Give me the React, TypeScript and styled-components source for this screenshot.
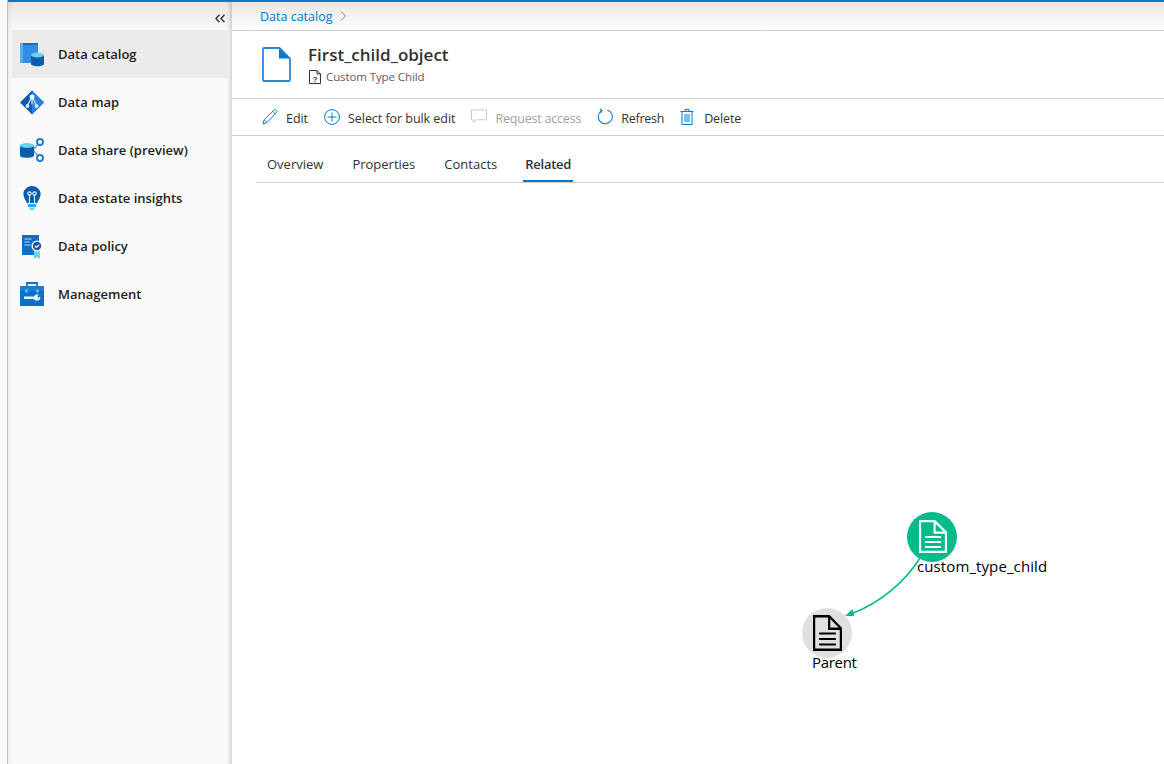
import { createGlobalStyle, styled } from "styled-components";
import type { ReactNode } from "react";

const FONT = `"Open Sans", "Noto Sans", "Liberation Sans", sans-serif`;

const GlobalStyle = createGlobalStyle`
  html, body { margin: 0; padding: 0; height: 100%; background: #fff; overflow: hidden; }
  * { box-sizing: border-box; }
  #root { height: 100%; }
`;

const Shell = styled.div`
  display: flex;
  width: 1164px;
  height: 764px;
  font-family: ${FONT};
  color: #323130;
  background: #fff;
`;

const Gutter = styled.div`
  width: 8px;
  flex: none;
  background: #f9f9f9;
  border-right: 1px solid #bdbdbd;
`;

const Frame = styled.div`
  flex: 1;
  display: flex;
  flex-direction: column;
  min-width: 0;
`;

const TopBar = styled.div`
  height: 2px;
  flex: none;
  background: #0078d4;
`;

const Body = styled.div`
  flex: 1;
  display: flex;
  min-height: 0;
`;

const Sidebar = styled.nav`
  width: 224px;
  flex: none;
  background: linear-gradient(#e6e6e6 0, #f6f6f6 22px, #fafafa 30px);
  box-shadow: inset -5px 0 4px -3px rgba(0, 0, 0, 0.18), inset 5px 0 4px -3px rgba(0, 0, 0, 0.06);
  padding: 4px 4px 0 4px;
  display: flex;
  flex-direction: column;
`;

const CollapseRow = styled.div`
  height: 24px;
  display: flex;
  align-items: center;
  justify-content: flex-end;
  padding-right: 3px;
`;

const NavItem = styled.div<{ $active?: boolean }>`
  height: 48px;
  display: flex;
  align-items: center;
  gap: 12px;
  padding-left: 8px;
  background: ${({ $active }) => ($active ? "#edebe9" : "transparent")};
  font-size: 13px;
  font-weight: 600;
  color: #201f1e;
`;

const NavIcon = styled.span`
  width: 26px;
  height: 26px;
  flex: none;
  display: flex;
`;

const Main = styled.main`
  flex: 1;
  min-width: 0;
  display: flex;
  flex-direction: column;
`;

const Crumbs = styled.div`
  height: 29px;
  flex: none;
  display: flex;
  align-items: center;
  gap: 8px;
  padding-left: 28px;
  font-size: 12.5px;
  color: #0078d4;
  background: linear-gradient(#e6e6e6, #ffffff);
  border-bottom: 1px solid #cfcfcf;
`;

const TitleBlock = styled.div`
  height: 68px;
  flex: none;
  display: flex;
  align-items: center;
  padding-left: 30px;
  gap: 17px;
  border-bottom: 1px solid #cfcfcf;
`;

const TitleText = styled.div`
  display: flex;
  flex-direction: column;
  gap: 2px;
`;

const Title = styled.h1`
  margin: 0;
  font-size: 17px;
  line-height: 22px;
  font-weight: 600;
  color: #323130;
`;

const Subtitle = styled.div`
  display: flex;
  align-items: center;
  gap: 5px;
  padding-left: 1px;
  font-size: 11.5px;
  line-height: 17px;
  color: #605e5c;
  letter-spacing: -0.1px;
`;

const Toolbar = styled.div`
  height: 37px;
  flex: none;
  display: flex;
  align-items: center;
  padding: 3px 0 0 30px;
  gap: 16px;
  border-bottom: 1px solid #cfcfcf;
`;

const Action = styled.div<{ $disabled?: boolean; $spacing: number }>`
  display: flex;
  align-items: center;
  gap: 8px;
  font-size: 12.5px;
  letter-spacing: ${({ $spacing }) => $spacing}px;
  color: ${({ $disabled }) => ($disabled ? "#a19f9d" : "#323130")};
`;

const ActionIcon = styled.span`
  display: flex;
  width: 16px;
  margin-top: -4px;
`;

const Tabs = styled.div`
  height: 47px;
  flex: none;
  margin-left: 24px;
  padding-left: 9px;
  display: flex;
  align-items: stretch;
  gap: 25px;
  border-bottom: 1px solid #cfcfcf;
`;

const Tab = styled.div<{ $active?: boolean }>`
  display: flex;
  align-items: center;
  padding: 11px 2px 0;
  margin-left: ${({ $active }) => ($active ? "-1px" : "0")};
  font-size: 13px;
  font-weight: ${({ $active }) => ($active ? 600 : 400)};
  letter-spacing: ${({ $active }) => ($active ? "-0.25px" : "0")};
  color: #323130;
  border-bottom: 2px solid ${({ $active }) => ($active ? "#0078d4" : "transparent")};
`;

const Canvas = styled.div`
  flex: 1;
  position: relative;
  min-height: 0;
`;

const Graph = styled.svg`
  position: absolute;
  left: 0;
  top: 0;
`;

const NodeLabel = styled.div<{ $x: number; $y: number; $spacing: number }>`
  position: absolute;
  left: ${({ $x }) => $x}px;
  top: ${({ $y }) => $y}px;
  font-size: 15px;
  line-height: 18px;
  color: #000;
  letter-spacing: ${({ $spacing }) => $spacing}px;
`;

const CatalogIcon = () => (
  <svg width="26" height="26" viewBox="0 0 26 26">
    <rect x="0" y="2" width="18" height="20" rx="1" fill="#2f8fe6" />
    <rect x="0" y="2" width="3" height="20" fill="#5ea9ea" />
    <rect x="3" y="2" width="15" height="2" fill="#0f6fc6" />
    <path d="M11 14v9c0 1.200 2.800 2.200 6.500 2.200S24 24.200 24 23v-9z" fill="#0b5cab" />
    <ellipse cx="17.500" cy="14" rx="6.500" ry="2.400" fill="#6fd0ea" />
  </svg>
);

const MapIcon = () => (
  <svg width="26" height="26" viewBox="0 0 26 26">
    <path d="M12 1.500l12 12-12 12-12-12z" fill="#0b5cab" />
    <path d="M12 1.500l12 12-12 12z" fill="#2a7fd8" />
    <path d="M12 7.500l-4.500 9M12 7.500l4.500 9M12 7.500v8" stroke="#cfe6fa" strokeWidth="1.300" fill="none" />
    <circle cx="12" cy="8" r="2.400" fill="#fff" />
    <circle cx="7.500" cy="17" r="1.900" fill="#dff0fd" />
    <circle cx="16.500" cy="17" r="1.900" fill="#dff0fd" />
  </svg>
);

const ShareIcon = () => (
  <svg width="26" height="26" viewBox="0 0 26 26">
    <path d="M13 13l7-8M13 13l7 8" stroke="#8a9db0" strokeWidth="1.500" fill="none" />
    <circle cx="20" cy="5" r="3" fill="#fff" stroke="#1a7fd4" strokeWidth="2" />
    <circle cx="20" cy="21" r="3" fill="#fff" stroke="#1a7fd4" strokeWidth="2" />
    <path d="M0 8.500v10c0 1.300 3.200 2.300 7 2.300s7-1 7-2.300v-10z" fill="#0b5cab" />
    <ellipse cx="7" cy="8.500" rx="7" ry="2.500" fill="#6fd0ea" />
  </svg>
);

const InsightsIcon = () => (
  <svg width="26" height="26" viewBox="0 0 26 26">
    <path d="M12 1C7 1 3.400 4.700 3.400 9.300c0 3.700 2.600 6 3.400 8.700h10.400c.8-2.700 3.400-5 3.400-8.700C20.600 4.700 17 1 12 1z" fill="#0b5cab" />
    <path d="M7.500 19h9l-.6 3H8.100z" fill="#35a7e8" />
    <path d="M9 22.500h6l-1 2.500h-4z" fill="#6fd8ee" />
    <path d="M9.500 18v-8M14.500 18v-8" stroke="#cfe6fa" strokeWidth="1.200" />
    <circle cx="9.500" cy="8.500" r="1.700" fill="none" stroke="#e6f3fd" strokeWidth="1.200" />
    <circle cx="14.500" cy="8.500" r="1.700" fill="none" stroke="#e6f3fd" strokeWidth="1.200" />
  </svg>
);

const PolicyIcon = () => (
  <svg width="26" height="26" viewBox="0 0 26 26">
    <rect x="2" y="2" width="17" height="20" fill="#0f6fc6" />
    <path d="M4.500 6h7M4.500 9h5M4.500 12h6" stroke="#bcdcf5" strokeWidth="1.200" />
    <path d="M14 16v10l3-2 3 2V16z" fill="#6fd0ea" />
    <circle cx="17" cy="13" r="5.500" fill="#fff" />
    <circle cx="17" cy="13" r="4.200" fill="#0b5cab" />
    <path d="M15 13l1.500 1.500 2.700-2.800" stroke="#fff" strokeWidth="1.100" fill="none" />
  </svg>
);

const ManagementIcon = () => (
  <svg width="26" height="26" viewBox="0 0 26 26">
    <path d="M7 5V2h10v3" fill="none" stroke="#0f6fc6" strokeWidth="1.800" />
    <rect x="0" y="5" width="24" height="20" fill="#0f6fc6" />
    <rect x="0" y="5" width="24" height="5" fill="#1a7fd4" />
    <rect x="5.500" y="8.500" width="2" height="3" fill="#6fd0ea" />
    <rect x="16.500" y="8.500" width="2" height="3" fill="#6fd0ea" />
    <path d="M4 15.500h10l1.500-2h3.500l-1.500 2 1 1.300 1.700-1.200v2.400l-1.500 1.500h-3.700l-1.300-1.500H4z" fill="#e4eef8" />
  </svg>
);

const DocGlyph = ({ color, x, y, width, height }: { color: string; x: number; y: number; width: number; height: number }) => (
  <svg x={x} y={y} width={width} height={height} viewBox="0 0 26 30" preserveAspectRatio="none">
    <path d="M1 1h13.500L25 11v18H1z" fill="none" stroke={color} strokeWidth="2" />
    <path d="M14.500 1v10.500H25" fill="none" stroke={color} strokeWidth="2" />
    <path d="M5.500 15.500h15M5.500 20h15M5.500 24.500h15" stroke={color} strokeWidth="1.700" />
  </svg>
);

const TitleFileIcon = () => (
  <svg width="29" height="35" viewBox="0 0 29 35">
    <path d="M1 2a1 1 0 0 1 1-1h15.500L28 11.500V33a1 1 0 0 1-1 1H2a1 1 0 0 1-1-1z" fill="#fff" stroke="#2b88d8" strokeWidth="1.800" />
    <path d="M17 1l11 10.500H17z" fill="#0078d4" />
  </svg>
);

const SmallUnknownFile = () => (
  <svg width="12" height="14" viewBox="0 0 12 14">
    <path d="M.5.500h7.500l3.500 3.500v9.500H.5z" fill="#fff" stroke="#323130" />
    <path d="M8 .500V4h3.500" fill="none" stroke="#323130" />
    <text x="6" y="11.500" fontSize="7.500" fontWeight="700" textAnchor="middle" fill="#323130" fontFamily="Liberation Sans, sans-serif">?</text>
  </svg>
);

const ICON = "#0078d4";

const PencilIcon = () => (
  <svg width="16" height="16" viewBox="0 0 17 17" fill="none" stroke={ICON} strokeWidth="1">
    <path d="M1 16l1.300-4.600L12.800 1c.8-.6 1.800-.5 2.500.2s.8 1.700.2 2.500L5 14.600z" />
    <path d="M2.300 11.400l3.100 3M11.500 2.500l3 3" />
  </svg>
);

const PlusCircleIcon = () => (
  <svg width="16" height="16" viewBox="0 0 16 16" fill="none" stroke={ICON} strokeWidth="1">
    <circle cx="8" cy="8" r="7.400" />
    <path d="M8 3.500v9M3.500 8h9" />
  </svg>
);

const CommentIcon = () => (
  <svg width="17" height="15" viewBox="0 0 17 15" fill="none" stroke="#c8c6c4" strokeWidth="1">
    <path d="M.5.500h16v10.500H5.500L2.500 14v-3H.5z" />
  </svg>
);

const RefreshIcon = () => (
  <svg width="16" height="17" viewBox="0 0 17 17" fill="none" stroke={ICON} strokeWidth="1.100">
    <path d="M5 2.200A7.500 7.500 0 1 0 11 1.500" />
    <path d="M3 .5l2.400 1.800L3.600 4.800" />
  </svg>
);

const TrashIcon = () => (
  <svg width="14" height="16" viewBox="0 0 14 16" fill="none" stroke={ICON} strokeWidth="1">
    <path d="M.5 2.500h13M2 2.500v13h10v-13M5 2.500V.5h4v2M5 5v8M7 5v8M9 5v8" />
  </svg>
);

const Chevrons = () => (
  <svg width="10" height="9" viewBox="0 0 10 9" fill="none" stroke="#323130" strokeWidth="1.400">
    <path d="M4.500 .8L1 4.500l3.500 3.700M9.500 .8L6 4.500l3.500 3.700" />
  </svg>
);

const CrumbArrow = () => (
  <svg width="7" height="10" viewBox="0 0 7 10" fill="none" stroke="#8a8886" strokeWidth="1">
    <path d="M1 .5L5.500 5 1 9.500" />
  </svg>
);

const navItems: { label: string; icon: ReactNode; active?: boolean }[] = [
  { label: "Data catalog", icon: <CatalogIcon />, active: true },
  { label: "Data map", icon: <MapIcon /> },
  { label: "Data share (preview)", icon: <ShareIcon /> },
  { label: "Data estate insights", icon: <InsightsIcon /> },
  { label: "Data policy", icon: <PolicyIcon /> },
  { label: "Management", icon: <ManagementIcon /> },
];

const actions: { label: string; icon: ReactNode; spacing: number; disabled?: boolean }[] = [
  { label: "Edit", icon: <PencilIcon />, spacing: -0.05 },
  { label: "Select for bulk edit", icon: <PlusCircleIcon />, spacing: -0.05 },
  { label: "Request access", icon: <CommentIcon />, spacing: -0.2, disabled: true },
  { label: "Refresh", icon: <RefreshIcon />, spacing: -0.25 },
  { label: "Delete", icon: <TrashIcon />, spacing: -0.1 },
];

export default function App() {
  return (
    <>
      <GlobalStyle />
      <Shell>
        <Gutter />
        <Frame>
          <TopBar />
          <Body>
            <Sidebar>
              <CollapseRow>
                <Chevrons />
              </CollapseRow>
              {navItems.map((item) => (
                <NavItem key={item.label} $active={item.active}>
                  <NavIcon>{item.icon}</NavIcon>
                  {item.label}
                </NavItem>
              ))}
            </Sidebar>
            <Main>
              <Crumbs>
                Data catalog
                <CrumbArrow />
              </Crumbs>
              <TitleBlock>
                <TitleFileIcon />
                <TitleText>
                  <Title>First_child_object</Title>
                  <Subtitle>
                    <SmallUnknownFile />
                    Custom Type Child
                  </Subtitle>
                </TitleText>
              </TitleBlock>
              <Toolbar>
                {actions.map((action) => (
                  <Action key={action.label} $disabled={action.disabled} $spacing={action.spacing}>
                    <ActionIcon>{action.icon}</ActionIcon>
                    {action.label}
                  </Action>
                ))}
              </Toolbar>
              <Tabs>
                <Tab>Overview</Tab>
                <Tab>Properties</Tab>
                <Tab>Contacts</Tab>
                <Tab $active>Related</Tab>
              </Tabs>
              <Canvas>
                <Graph width="932" height="581" viewBox="232 183 932 581">
                  <path d="M920 558C905 582 880 603 851 614" fill="none" stroke="#00b98c" strokeWidth="1.500" />
                  <path d="M845 616l7.500-7 1.500 7z" fill="#00b98c" />
                  <circle cx="932" cy="537" r="25" fill="#00bc8b" />
                  <circle cx="827" cy="633" r="25" fill="#e0e0e0" />
                  <DocGlyph color="#fff" x={919} y={520} width={28} height={33} />
                  <DocGlyph color="#000" x={813} y={615} width={29} height={36} />
                </Graph>
                <NodeLabel $x={685} $y={374} $spacing={0.1}>custom_type_child</NodeLabel>
                <NodeLabel $x={580} $y={470} $spacing={-0.3}>Parent</NodeLabel>
              </Canvas>
            </Main>
          </Body>
        </Frame>
      </Shell>
    </>
  );
}
